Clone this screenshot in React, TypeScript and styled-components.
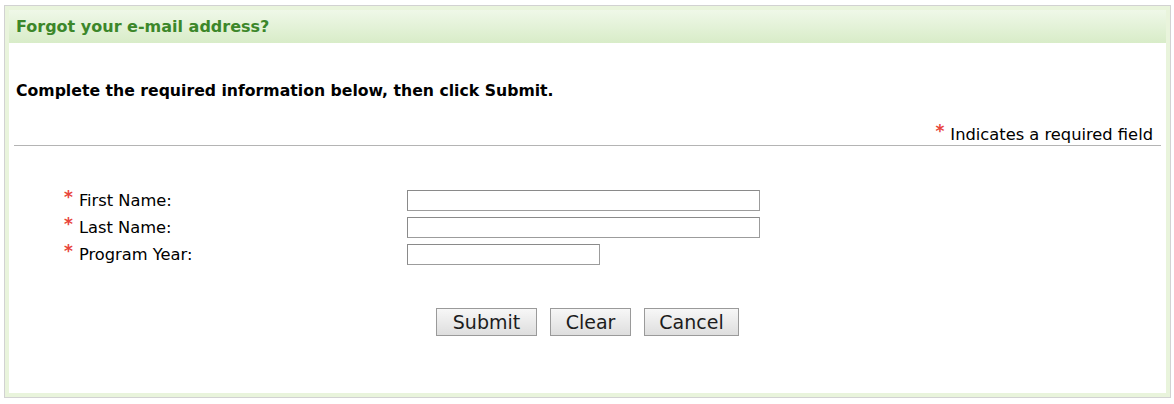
import React from "react";
import styled, { createGlobalStyle } from "styled-components";

const GlobalStyle = createGlobalStyle`
  html, body { margin: 0; padding: 0; background: #ffffff; }
  body { font-family: "DejaVu Sans", Verdana, sans-serif; color: #000; }
`;

const Frame = styled.div`
  box-sizing: border-box;
  margin: 5px 0 0 4px;
  width: 1167px;
  height: 393px;
  border: 1px solid #d2d2d2;
  background: #e9f4dc;
  padding: 4px;
  display: flex;
  flex-direction: column;
`;

const Header = styled.div`
  height: 33px;
  flex: none;
  display: flex;
  align-items: center;
  padding: 0 7px;
  background: linear-gradient(#eff8e8, #d8ecc8);
  color: #3c872a;
  font-weight: bold;
  font-size: 16px;
`;

const Body = styled.div`
  flex: 1;
  background: #ffffff;
  padding: 38px 5px 0;
  display: flex;
  flex-direction: column;
`;

const Intro = styled.div`
  font-size: 15.7px;
  font-weight: bold;
  line-height: 19px;
  padding-left: 2px;
`;

const RequiredNote = styled.div`
  margin-top: 25px;
  font-size: 16.3px;
  line-height: 19px;
  text-align: right;
  padding: 0 8px 1px 0;
  border-bottom: 1px solid #b4b4b4;
`;

const Star = styled.span`
  color: #e8453c;
  font-size: 17px;
  font-weight: bold;
  position: relative;
  top: -3px;
  margin-right: 6px;
`;

const Form = styled.div`
  margin-top: 41px;
  padding-left: 50px;
  display: grid;
  grid-template-columns: 343px auto;
  grid-auto-rows: 27px;
  align-items: center;
`;

const Label = styled.div`
  font-size: 16.3px;
  line-height: 19px;
  display: flex;
  align-items: center;
`;

const Input = styled.input<{ $w: number }>`
  box-sizing: border-box;
  width: ${(p) => p.$w}px;
  height: 21px;
  margin: 0;
  border: 1px solid #9c9c9c;
  border-top-color: #8a8a8a;
  border-left-color: #8a8a8a;
  background: #fff;
  padding: 0 3px;
  font-family: "DejaVu Sans", Verdana, sans-serif;
  font-size: 14px;
`;

const Buttons = styled.div`
  margin-top: 40px;
  display: flex;
  justify-content: center;
  gap: 13px;
`;

const Button = styled.button<{ $w: number }>`
  box-sizing: border-box;
  width: ${(p) => p.$w}px;
  height: 28px;
  margin: 0;
  padding: 0;
  border: 1px solid #9a9a9a;
  background: linear-gradient(#f7f7f7, #dedede);
  color: #1c1c1c;
  font-family: "DejaVu Sans", Verdana, sans-serif;
  font-size: 19px;
  line-height: 26px;
`;

const fields = [
  { label: "First Name:", w: 353 },
  { label: "Last Name:", w: 353 },
  { label: "Program Year:", w: 193 },
];

export default function App() {
  return (
    <>
      <GlobalStyle />
      <Frame>
        <Header>Forgot your e-mail address?</Header>
        <Body>
          <Intro>Complete the required information below, then click Submit.</Intro>
          <RequiredNote>
            <Star>*</Star>Indicates a required field
          </RequiredNote>
          <Form>
            {fields.map((f) => (
              <React.Fragment key={f.label}>
                <Label>
                  <Star>*</Star>
                  {f.label}
                </Label>
                <Input type="text" $w={f.w} />
              </React.Fragment>
            ))}
          </Form>
          <Buttons>
            <Button $w={101}>Submit</Button>
            <Button $w={81}>Clear</Button>
            <Button $w={95}>Cancel</Button>
          </Buttons>
        </Body>
      </Frame>
    </>
  );
}
